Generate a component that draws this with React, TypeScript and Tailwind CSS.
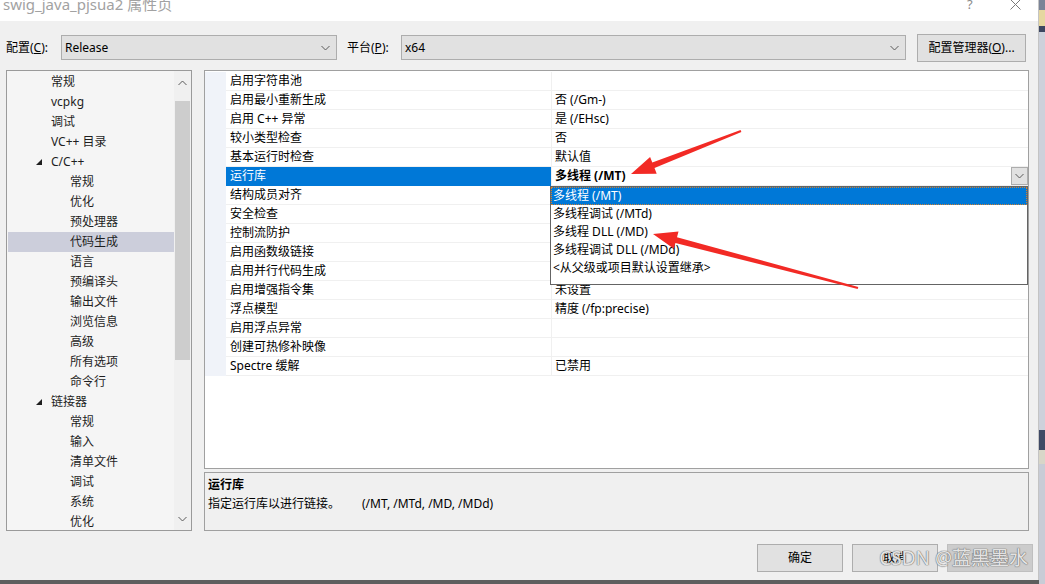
import React from 'react';

const treeItems: { t: string; l: number; exp?: boolean; sel?: boolean }[] = [
  { t: '常规', l: 1 },
  { t: 'vcpkg', l: 1 },
  { t: '调试', l: 1 },
  { t: 'VC++ 目录', l: 1 },
  { t: 'C/C++', l: 1, exp: true },
  { t: '常规', l: 2 },
  { t: '优化', l: 2 },
  { t: '预处理器', l: 2 },
  { t: '代码生成', l: 2, sel: true },
  { t: '语言', l: 2 },
  { t: '预编译头', l: 2 },
  { t: '输出文件', l: 2 },
  { t: '浏览信息', l: 2 },
  { t: '高级', l: 2 },
  { t: '所有选项', l: 2 },
  { t: '命令行', l: 2 },
  { t: '链接器', l: 1, exp: true },
  { t: '常规', l: 2 },
  { t: '输入', l: 2 },
  { t: '清单文件', l: 2 },
  { t: '调试', l: 2 },
  { t: '系统', l: 2 },
  { t: '优化', l: 2 },
];

const props: [string, string][] = [
  ['启用字符串池', ''],
  ['启用最小重新生成', '否 (/Gm-)'],
  ['启用 C++ 异常', '是 (/EHsc)'],
  ['较小类型检查', '否'],
  ['基本运行时检查', '默认值'],
  ['运行库', '多线程 (/MT)'],
  ['结构成员对齐', '默认设置'],
  ['安全检查', '启用安全检查 (/GS)'],
  ['控制流防护', '否'],
  ['启用函数级链接', ''],
  ['启用并行代码生成', ''],
  ['启用增强指令集', '未设置'],
  ['浮点模型', '精度 (/fp:precise)'],
  ['启用浮点异常', ''],
  ['创建可热修补映像', ''],
  ['Spectre 缓解', '已禁用'],
];

const options = ['多线程 (/MT)', '多线程调试 (/MTd)', '多线程 DLL (/MD)', '多线程调试 DLL (/MDd)', '<从父级或项目默认设置继承>'];

const Chevron = ({ up = false }: { up?: boolean }) => (
  <svg width="9" height="6" viewBox="0 0 9 6" className={up ? 'rotate-180' : ''}>
    <path d="M0.5 1 L4.5 5 L8.5 1" fill="none" stroke="#5a5a5a" strokeWidth="1" />
  </svg>
);

const Triangle = () => (
  <svg width="6" height="6" viewBox="0 0 6 6">
    <polygon points="6,0 6,6 0,6" fill="#1e1e1e" />
  </svg>
);

const Select = ({ value, w }: { value: string; w: string }) => (
  <div className={`flex h-[25px] items-center justify-between border border-[#adadad] bg-[#e1e1e1] pl-[3px] pr-[6px] ${w}`}>
    <span className="text-[12px] text-black">{value}</span>
    <Chevron />
  </div>
);

const Button = ({ label, disabled = false, w = 'w-[86px]' }: { label: React.ReactNode; disabled?: boolean; w?: string }) => (
  <div
    className={`flex h-[28px] items-center justify-center border text-[12px] ${w} ${
      disabled ? 'border-[#bfbfbf] bg-[#cccccc] text-[#a0a0a0]' : 'border-[#adadad] bg-[#e1e1e1] text-black'
    }`}
  >
    {label}
  </div>
);

const App = () => {
  return (
    <div className="relative flex h-[584px] w-[1045px] overflow-hidden bg-[#5e5e5e] font-['Noto_Sans','Noto_Sans_CJK_SC',sans-serif] leading-none">
      {/* dialog */}
      <div className="flex h-[580px] w-[1039px] flex-col border-r border-[#c4c4c4] bg-[#f0f0f0]">
        {/* title bar */}
        <div className="relative flex h-[21px] items-start bg-white">
          <span className="-mt-[6px] ml-[3px] text-[15px] leading-[20px] text-[#a2a2a2]">swig_java_pjsua2 属性页</span>
          <span className="absolute left-[967px] -top-[4px] text-[13px] leading-[16px] text-[#8a8a8a]">?</span>
          <svg className="absolute left-[1010px] -top-[1px]" width="11" height="11" viewBox="0 0 11 11">
            <path d="M0.5 0.5 L10.5 10.5 M10.5 0.5 L0.5 10.5" stroke="#7a7a7a" strokeWidth="1" />
          </svg>
        </div>

        {/* configuration row */}
        <div className="mt-[13px] flex h-[27px] items-center pl-[6px] text-[12px] text-black">
          <span className="w-[55px]">
            配置(<span className="underline">C</span>):
          </span>
          <Select value="Release" w="w-[276px]" />
          <span className="ml-[10px] w-[54px]">
            平台(<span className="underline">P</span>):
          </span>
          <Select value="x64" w="w-[505px]" />
          <div className="ml-[11px]">
            <Button label={<span>配置管理器(<span className="underline">O</span>)...</span>} w="w-[109px]" />
          </div>
        </div>

        {/* main area */}
        <div className="mt-[9px] flex pl-[6px]">
          {/* tree */}
          <div className="flex h-[461px] w-[186px] border border-[#9a9a9a] bg-[#f5f5f5]">
            <div className="w-[167px] overflow-hidden pt-[1px]">
              {treeItems.map((it, i) => (
                <div
                  key={i}
                  className={`relative flex h-[20px] items-center text-[12px] text-[#1e1e1e] ${it.sel ? 'ml-[1px] bg-[#cccedb]' : ''} ${
                    it.l === 1 ? 'pl-[44px]' : 'pl-[63px]'
                  }`}
                >
                  {it.exp && (
                    <span className="absolute left-[29px] top-[7px] flex">
                      <Triangle />
                    </span>
                  )}
                  <span className={it.sel ? '-ml-[1px]' : ''}>{it.t}</span>
                </div>
              ))}
            </div>
            <div className="flex w-[17px] flex-col bg-[#f0f0f0]">
              <div className="flex h-[30px] items-start justify-center pt-[9px]">
                <Chevron up />
              </div>
              <div className="mx-[1px] h-[259px] bg-[#cdcdcd]" />
              <div className="flex-1" />
              <div className="flex h-[20px] items-start justify-center pt-[6px]">
                <Chevron />
              </div>
            </div>
          </div>

          {/* right column */}
          <div className="ml-[12px] flex w-[825px] flex-col">
            {/* property grid */}
            <div className="h-[399px] border border-[#a0a0a0] bg-white pt-[1px]">
              {props.map(([name, value], i) => {
                const sel = name === '运行库';
                return (
                  <div key={i} className="relative flex h-[19px] text-[12px]">
                    <div className="w-[21px] bg-[#f0f3f9]" />
                    <div
                      className={`flex w-[325px] items-center border-b pl-[4px] ${
                        sel ? 'border-[#0078d7] bg-[#0078d7] text-white' : 'border-[#f0f0f0] text-black'
                      }`}
                    >
                      {name}
                    </div>
                    <div className="relative flex flex-1 items-center justify-between border-b border-l border-[#f0f0f0] pl-[3px] text-black">
                      <span className={sel ? 'font-bold' : ''}>{value}</span>
                      {sel && (
                        <>
                          <div className="flex h-[18px] w-[17px] items-center justify-center self-start border border-[#adadad] bg-[#e1e1e1]">
                            <Chevron />
                          </div>
                          <div className="absolute -left-[2px] top-[19px] z-10 flex h-[99px] w-[478px] flex-col border border-[#646464] bg-white">
                            {options.map((o, j) => (
                              <div
                                key={j}
                                className={`flex h-[18px] items-center pl-[2px] ${
                                  j === 0 ? 'bg-[#0078d7] text-white outline outline-1 outline-dotted outline-offset-[-1px] outline-[#d08030]' : 'text-black'
                                }`}
                              >
                                {o}
                              </div>
                            ))}
                          </div>
                        </>
                      )}
                    </div>
                  </div>
                );
              })}
            </div>

            {/* description */}
            <div className="mt-[3px] h-[59px] border border-[#a0a0a0] bg-[#f0f0f0] pl-[3px] pt-[2px] text-[12px] leading-[19px] text-black">
              <div className="font-bold">运行库</div>
              <div className="flex">
                <span className="w-[154px]">指定运行库以进行链接。</span>
                <span>(/MT, /MTd, /MD, /MDd)</span>
              </div>
            </div>
          </div>
        </div>

        {/* buttons */}
        <div className="relative mt-[13px] flex justify-end gap-[9px] pr-[5px]">
          <Button label="确定" />
          <Button label="取消" />
          <Button label="应用(A)" disabled />
          <span className="absolute right-[10px] top-[2px] text-[19px] leading-[24px] text-[#f2f2f2]/90 [text-shadow:0_0_1px_#7a7a7a,0_0_1px_#7a7a7a,0_0_1px_#7a7a7a]">
            CSDN @蓝黑墨水
          </span>
        </div>
      </div>

      {/* background strip at the right */}
      <div className="flex w-[6px] flex-col">
        <div className="h-[10px] bg-[#7b8497]" />
        <div className="h-[16px] bg-[#e6d7a0]" />
        <div className="h-[6px] bg-[#3c4660]" />
        <div className="h-[398px] bg-[#cdd1db]" />
        <div className="h-[20px] bg-[#3f4a66]" />
        <div className="h-[14px] bg-[#d8d6c8]" />
        <div className="flex-1 bg-[#c8ccd6]" />
      </div>

      {/* annotation arrows */}
      <svg className="pointer-events-none absolute left-0 top-0 z-20" width="1045" height="584" viewBox="0 0 1045 584">
        <polygon
          points="631,174 650.1,156.9 652.3,162.5 740.6,130 741.4,132 654.5,168.1 656.7,173.7"
          fill="#f22a25"
        />
        <polygon
          points="653,234 678.5,231.4 677,237.2 858.3,287 857.7,289 675.4,243 673.9,248.8"
          fill="#f22a25"
        />
      </svg>
    </div>
  );
};

export default App;
